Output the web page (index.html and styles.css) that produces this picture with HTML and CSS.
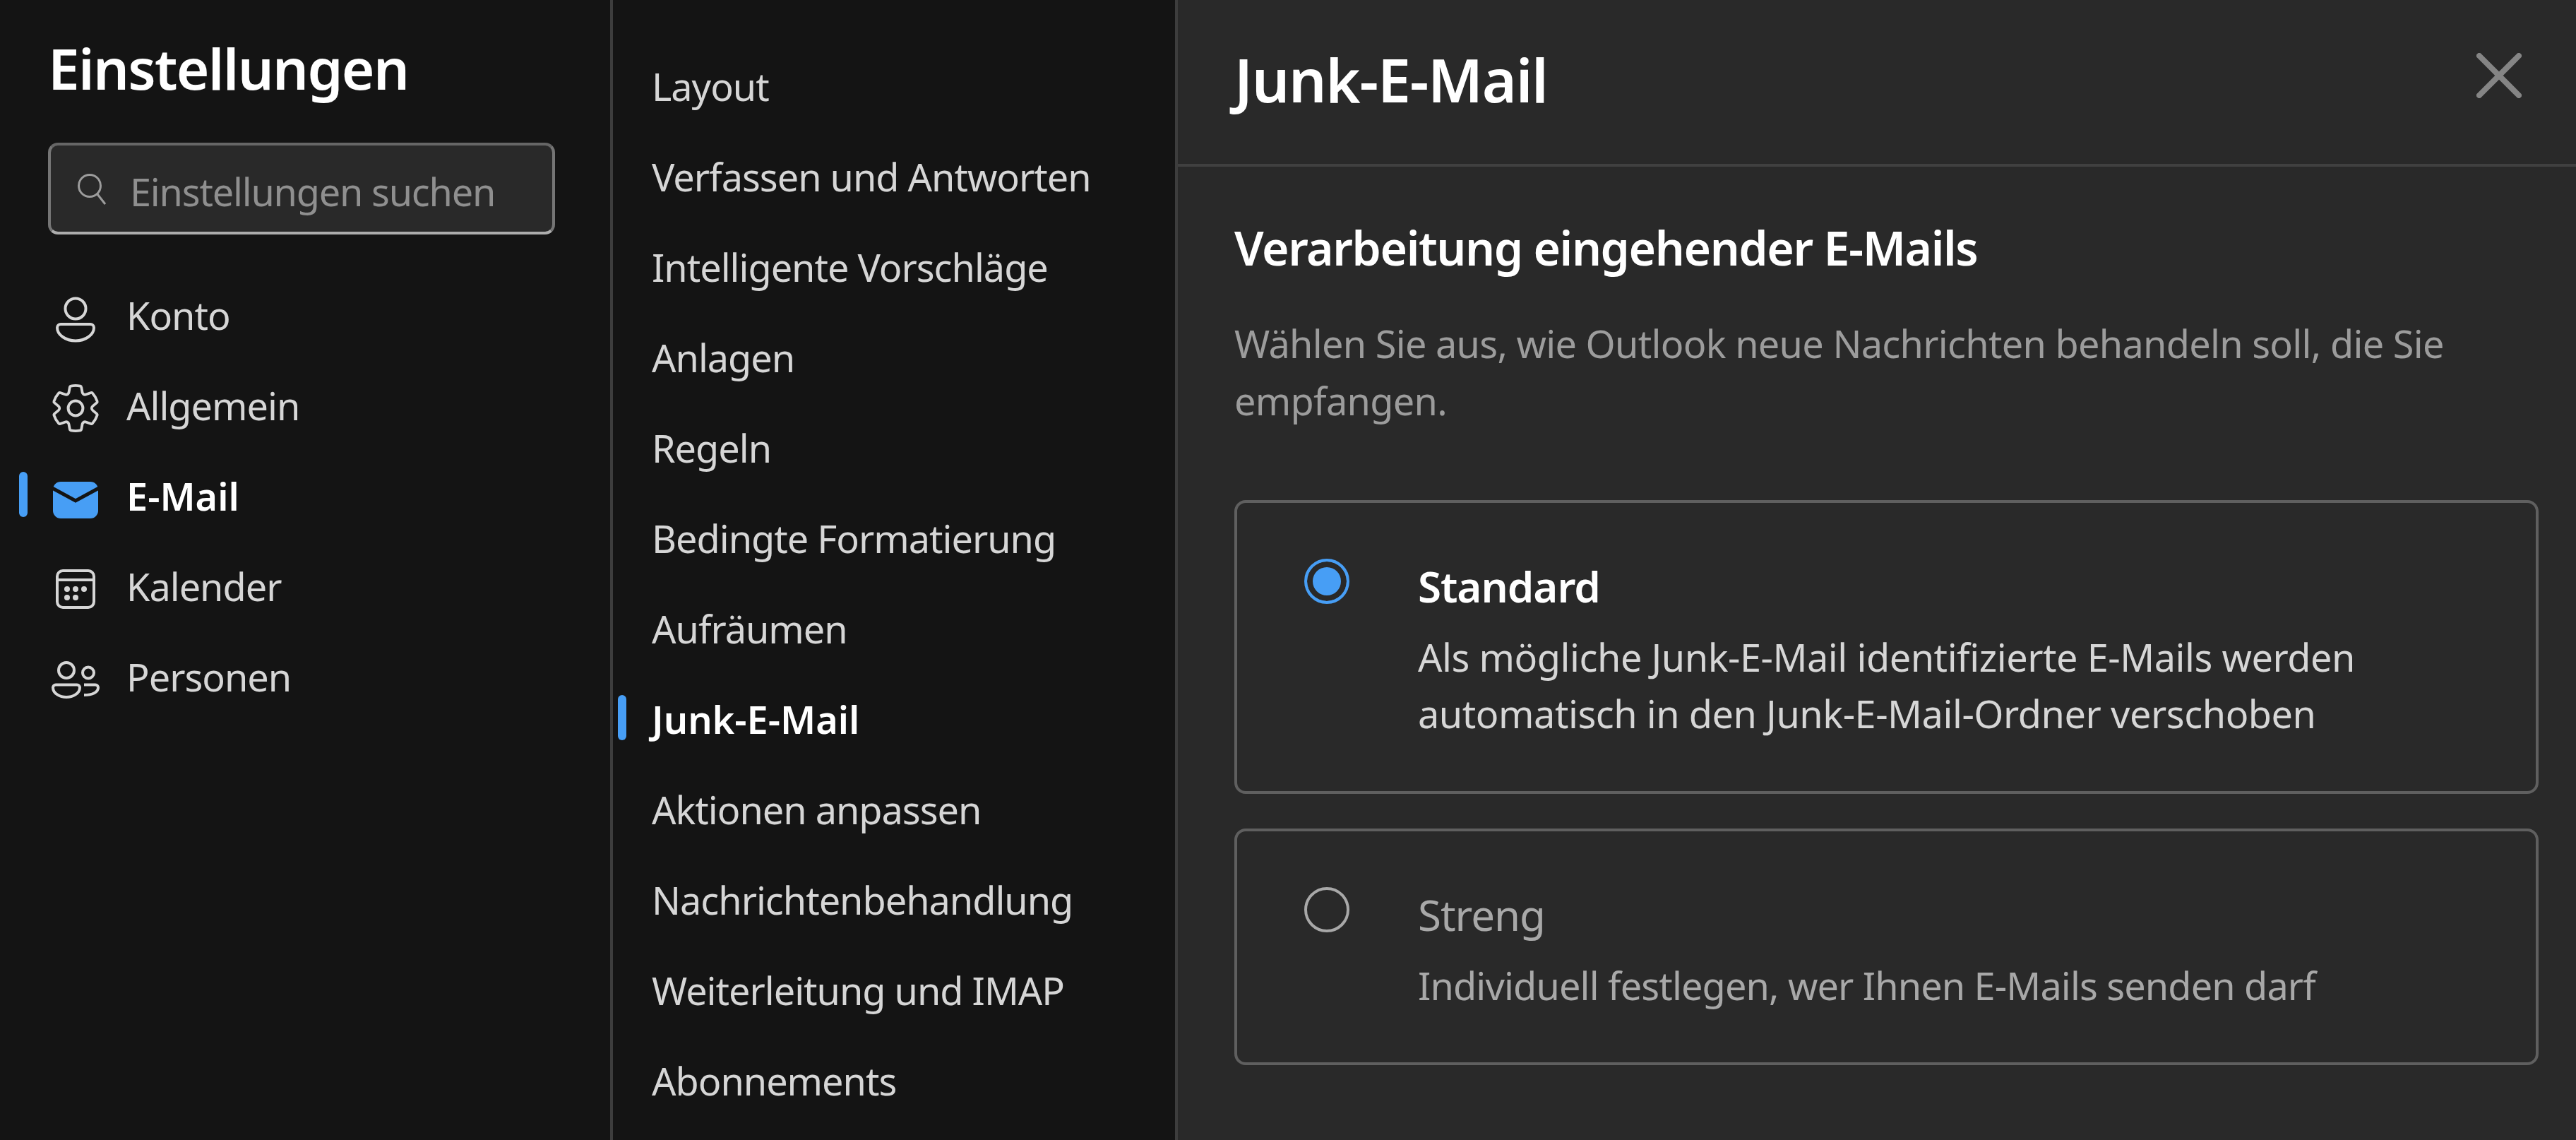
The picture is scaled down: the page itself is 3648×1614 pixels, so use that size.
FILE: index.html
```html
<!DOCTYPE html>
<html>
  <head>
    <title>Einstellungen</title>
    <link rel="stylesheet" href="styles.css">
  </head>
  <body>
    <aside class="sidebar">
      <h1 class="sidebar-title">Einstellungen</h1>
      <div class="search">
        <svg class="search-icon" viewBox="0 0 48 48"><circle cx="19" cy="19" r="15.5"/><path d="M30 31 L41 45"/></svg>
        <span class="search-label">Einstellungen suchen</span>
      </div>
      <nav class="main-nav">
        <a class="main-item">
          <svg class="icon" viewBox="0 0 80 80"><circle cx="40" cy="27" r="14.5"/><path d="M19 49H61a5 5 0 0 1 5 5c0 10-12 18.5-26 18.5S14 64 14 54a5 5 0 0 1 5-5Z"/></svg>
          <span class="label">Konto</span>
        </a>
        <a class="main-item">
          <svg class="icon" viewBox="0 0 20 20"><g transform="translate(0.55 0.55) scale(0.945)"><path d="M1.91 7.38A8.5 8.5 0 0 1 3.7 4.3a.5.5 0 0 1 .54-.13l1.92.68a1 1 0 0 0 1.32-.76l.36-2a.5.5 0 0 1 .4-.4 8.53 8.53 0 0 1 3.55 0c.2.04.35.2.38.4l.37 2a1 1 0 0 0 1.32.76l1.92-.68a.5.5 0 0 1 .54.13 8.5 8.5 0 0 1 1.78 3.08c.06.2 0 .4-.15.54l-1.56 1.32a1 1 0 0 0 0 1.52l1.56 1.32a.5.5 0 0 1 .15.54 8.5 8.5 0 0 1-1.78 3.08.5.5 0 0 1-.54.13l-1.92-.68a1 1 0 0 0-1.32.76l-.37 2a.5.5 0 0 1-.38.4 8.53 8.53 0 0 1-3.56 0 .5.5 0 0 1-.39-.4l-.36-2a1 1 0 0 0-1.32-.76l-1.92.68a.5.5 0 0 1-.54-.13 8.5 8.5 0 0 1-1.78-3.08.5.5 0 0 1 .15-.54l1.56-1.32a1 1 0 0 0 0-1.52L2.06 7.92a.5.5 0 0 1-.15-.54Z"/></g><circle cx="10" cy="10" r="2.6"/></svg>
          <span class="label">Allgemein</span>
        </a>
        <a class="main-item active">
          <span class="marker"></span>
          <svg class="icon" viewBox="0 0 80 80"><rect class="mail-body" x="8" y="16" width="64" height="52" rx="11"/><path class="mail-flap" d="M7 25 40 43 73 25"/></svg>
          <span class="label">E-Mail</span>
        </a>
        <a class="main-item">
          <svg class="icon" viewBox="0 0 80 80"><rect x="14" y="14" width="52" height="52" rx="8"/><path d="M14 27H66"/><g class="dots"><circle cx="28" cy="40" r="4"/><circle cx="40" cy="40" r="4"/><circle cx="52" cy="40" r="4"/><circle cx="28" cy="52" r="4"/><circle cx="40" cy="52" r="4"/></g></svg>
          <span class="label">Kalender</span>
        </a>
        <a class="main-item">
          <svg class="icon" viewBox="0 0 80 80"><circle cx="27" cy="27" r="11"/><circle cx="58" cy="30.5" r="8"/><path d="M12 47.5H42a4 4 0 0 1 4 4C46 60 36 65 27 65S8 60 8 51.5a4 4 0 0 1 4-4Z"/><path d="M52 47.5H68a4 4 0 0 1 4 4C72 58 64 62 52 62"/></svg>
          <span class="label">Personen</span>
        </a>
      </nav>
    </aside>

    <nav class="sub-nav">
      <a class="sub-item">Layout</a>
      <a class="sub-item">Verfassen und Antworten</a>
      <a class="sub-item">Intelligente Vorschläge</a>
      <a class="sub-item">Anlagen</a>
      <a class="sub-item">Regeln</a>
      <a class="sub-item">Bedingte Formatierung</a>
      <a class="sub-item">Aufräumen</a>
      <a class="sub-item active"><span class="marker"></span>Junk-E-Mail</a>
      <a class="sub-item">Aktionen anpassen</a>
      <a class="sub-item">Nachrichtenbehandlung</a>
      <a class="sub-item">Weiterleitung und IMAP</a>
      <a class="sub-item">Abonnements</a>
    </nav>

    <main class="panel">
      <header class="panel-header">
        <h2 class="panel-title">Junk-E-Mail</h2>
        <svg class="close" viewBox="0 0 64 64"><path d="M4 4 60 60M60 4 4 60"/></svg>
      </header>
      <section class="panel-body">
        <h3 class="section-title">Verarbeitung eingehender E-Mails</h3>
        <p class="section-text">Wählen Sie aus, wie Outlook neue Nachrichten behandeln soll, die Sie<br>empfangen.</p>
        <div class="option selected">
          <span class="radio"></span>
          <div>
            <div class="option-title">Standard</div>
            <div class="option-text">Als mögliche Junk-E-Mail identifizierte E-Mails werden<br>automatisch in den Junk-E-Mail-Ordner verschoben</div>
          </div>
        </div>
        <div class="option">
          <span class="radio"></span>
          <div>
            <div class="option-title">Streng</div>
            <div class="option-text">Individuell festlegen, wer Ihnen E-Mails senden darf</div>
          </div>
        </div>
      </section>
    </main>
  </body>
</html>
```

FILE: styles.css
```css
*{
    box-sizing: border-box;
}
html, body{
    height: 100%;
}
body{
    margin: 0;
    display: flex;
    overflow: hidden;
    background: #141414;
    color: #d6d6d6;
    font-family: "Noto Sans", "Open Sans", sans-serif;
    font-size: 54px;
    letter-spacing: -1px;
}
h1, h2, h3, p{
    margin: 0;
}
.marker{
    position: absolute;
    top: 26px;
    width: 12px;
    height: 64px;
    border-radius: 6px;
    background: #479ef5;
}

/* first column */
.sidebar{
    width: 864px;
    flex: none;
    padding: 42px 78px 0 68px;
}
.sidebar-title{
    font-size: 80px;
    line-height: 108px;
    font-weight: 600;
    color: #fff;
    letter-spacing: -1.7px;
}
.search{
    display: flex;
    align-items: center;
    height: 130px;
    margin-top: 52px;
    padding-left: 36px;
    background: #292929;
    border: 4px solid #757575;
    border-top-color: #666;
    border-bottom-color: #adadad;
    border-radius: 14px;
    color: #8f8f8f;
    letter-spacing: -1.2px;
}
.search-icon{
    width: 48px;
    height: 48px;
    margin: 2px 28px 0 0;
    fill: none;
    stroke: #9c9c9c;
    stroke-width: 3;
}
.search-label{
    margin-top: 8px;
}
.main-nav{
    margin-top: 54px;
}
.main-item{
    position: relative;
    display: flex;
    align-items: center;
    height: 128px;
    margin-left: -68px;
    padding-left: 67px;
    line-height: 80px;
}
.main-item .marker{
    left: 27px;
}
.label{
    margin-bottom: 8px;
}
.main-item.active, .sub-item.active{
    color: #fff;
    font-weight: 600;
    letter-spacing: 0;
}
.icon{
    flex: none;
    width: 80px;
    height: 80px;
    margin-right: 32px;
    fill: none;
    stroke: #d6d6d6;
    stroke-width: 4;
}
.icon[viewBox="0 0 20 20"]{
    stroke-width: 1;
}
.dots{
    fill: #d6d6d6;
    stroke: none;
}
.mail-body{
    fill: #479ef5;
    stroke: none;
}
.mail-flap{
    stroke: #141414;
    stroke-width: 5;
}

/* second column */
.sub-nav{
    width: 804px;
    flex: none;
    padding-top: 58px;
    border-left: 4px solid #3d3d3d;
    border-right: 4px solid #3d3d3d;
}
.sub-item{
    position: relative;
    display: flex;
    align-items: center;
    height: 128px;
    padding-left: 55px;
}
.sub-item .marker{
    top: 30px;
    left: 7px;
}

/* settings panel */
.panel{
    flex: 1;
    background: #292929;
    color: #fff;
}
.panel-header{
    display: flex;
    align-items: center;
    justify-content: space-between;
    height: 236px;
    padding: 0 77px 18px 80px;
    border-bottom: 4px solid #404040;
}
.panel-title{
    font-size: 84px;
    font-weight: 600;
    letter-spacing: -1.3px;
    margin-top: 10px;
}
.close{
    width: 64px;
    height: 64px;
    fill: none;
    stroke: #858585;
    stroke-width: 8;
    stroke-linecap: round;
}
.panel-body{
    padding: 70px 53px 0 80px;
}
.section-title{
    font-size: 66px;
    line-height: 88px;
    font-weight: 600;
    letter-spacing: -1.4px;
}
.section-text{
    margin-top: 52px;
    line-height: 81px;
    color: #9c9c9c;
    letter-spacing: -0.7px;
}
.option{
    display: flex;
    margin-top: 49px;
    padding: 74px 0 69px 95px;
    border: 4px solid #5f5f5f;
    border-radius: 16px;
    color: #a8a8a8;
}
.section-text + .option{
    margin-top: 100px;
    padding-bottom: 70px;
}
.radio{
    flex: none;
    width: 64px;
    height: 64px;
    margin: 5px 97px 0 0;
    border: 4px solid #a8a8a8;
    border-radius: 50%;
}
.option-title{
    font-size: 60px;
    line-height: 88px;
    letter-spacing: -1px;
}
.option-text{
    margin-top: 16px;
    line-height: 80px;
    letter-spacing: -0.85px;
}
.selected{
    color: #d6d6d6;
}
.selected .option-title{
    color: #fff;
    font-weight: 600;
}
.selected .option-text{
    letter-spacing: -0.45px;
}
.selected .radio{
    border-color: #479ef5;
    background: #479ef5;
    box-shadow: inset 0 0 0 8px #292929;
}
```
